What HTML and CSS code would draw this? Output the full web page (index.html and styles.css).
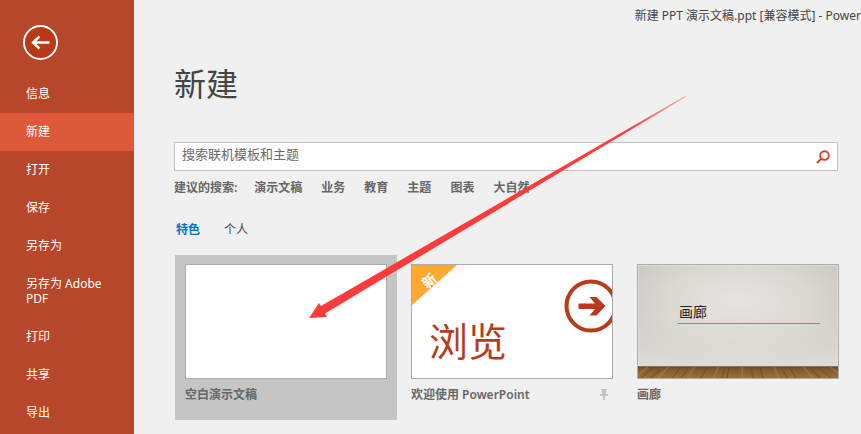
FILE: index.html
```html
<!DOCTYPE html>
<html lang="zh-CN">
<head>
<meta charset="utf-8">
<title>新建 PPT 演示文稿.ppt</title>
<link rel="stylesheet" href="styles.css">
</head>
<body>
<div class="app">
  <nav class="sidebar">
    <button class="back" type="button" aria-label="返回">
      <svg width="36" height="36" viewBox="0 0 36 36">
        <circle cx="18.500" cy="18.500" r="16.500" fill="#b93817" stroke="#fff" stroke-width="1.900"/>
        <path d="M27.500 18.500H11.500M17.500 12.500L11 18.500L17.500 24.500" fill="none" stroke="#fff" stroke-width="2.500"/>
      </svg>
    </button>
    <a class="nav-item" href="#">信息</a>
    <a class="nav-item active" href="#" aria-current="page">新建</a>
    <a class="nav-item" href="#">打开</a>
    <a class="nav-item" href="#">保存</a>
    <a class="nav-item" href="#">另存为</a>
    <a class="nav-item" href="#">另存为 Adobe PDF</a>
    <a class="nav-item" href="#">打印</a>
    <a class="nav-item" href="#">共享</a>
    <a class="nav-item" href="#">导出</a>
  </nav>
  <main class="main">
    <div class="titlebar">新建 PPT 演示文稿.ppt [兼容模式] - Power</div>
    <h1 class="heading">新建</h1>
    <form class="search">
      <input class="search-input" type="text" placeholder="搜索联机模板和主题" aria-label="搜索联机模板和主题">
      <button class="search-button" type="button" aria-label="搜索">
        <svg width="14" height="14" viewBox="0 0 14 14" fill="none" stroke="#d24726">
          <circle cx="8.500" cy="5.500" r="4.300" stroke-width="1.900"/>
          <path d="M5.500 8.500L1 13" stroke-width="2.200"/>
        </svg>
      </button>
    </form>
    <div class="suggestions">
      <span class="suggest-label">建议的搜索:</span>
      <a href="#">演示文稿</a>
      <a href="#">业务</a>
      <a href="#">教育</a>
      <a href="#">主题</a>
      <a href="#">图表</a>
      <a href="#">大自然</a>
    </div>
    <div class="tabs">
      <button class="tab selected" type="button">特色</button>
      <button class="tab" type="button">个人</button>
    </div>
    <div class="cards">
      <a class="card selected" href="#">
        <span class="thumb"></span>
        <span class="caption">空白演示文稿</span>
      </a>
      <a class="card" href="#">
        <span class="thumb browse">
          <svg class="art" viewBox="0 0 200 113" preserveAspectRatio="none">
            <path d="M0 0H45L0 40Z" fill="#ffa832"/>
            <circle cx="179" cy="41" r="24.500" fill="none" stroke="#b83c1c" stroke-width="4"/>
            <path d="M166.500 38.500H183L177.500 32H184.500L193.500 41L184.500 50.500H177.500L183 44H166.500Z" fill="#b83c1c"/>
          </svg>
          <span class="badge">新</span>
          <span class="browse-text">浏览</span>
        </span>
        <span class="caption">欢迎使用 PowerPoint
          <svg class="pin" width="8" height="11" viewBox="0 0 8 11"><path d="M1 0H7V1H6V5H8V7H5V11H3V7H0V5H2V1H1Z" fill="#c3c3c3"/></svg>
        </span>
      </a>
      <a class="card" href="#">
        <span class="thumb gallery">
          <svg class="art" viewBox="0 0 200 113" preserveAspectRatio="none">
            <defs>
              <radialGradient id="wall" cx=".5" cy=".35" r=".65">
                <stop offset="0" stop-color="#e6e4e1"/>
                <stop offset=".55" stop-color="#dbd8d4"/>
                <stop offset="1" stop-color="#c9c6c2"/>
              </radialGradient>
              <linearGradient id="light" x2="0" y2="1">
                <stop offset=".4" stop-color="#e5e2dc" stop-opacity="0"/>
                <stop offset="1" stop-color="#e5e2dc" stop-opacity=".8"/>
              </linearGradient>
              <linearGradient id="wood" x2="0" y2="1">
                <stop offset="0" stop-color="#68482a"/>
                <stop offset=".3" stop-color="#80592f"/>
                <stop offset="1" stop-color="#9b713d"/>
              </linearGradient>
            </defs>
            <rect width="200" height="102" fill="url(#wall)"/>
            <rect width="200" height="102" fill="url(#light)"/>
            <path d="M.5 101V.5H199.500V101" fill="none" stroke="#e7e5e2" stroke-opacity=".7"/>
            <rect y="101" width="200" height="12" fill="url(#wood)"/>
            <path d="M16 102L3 113M43 102L34 113M69 102L63 113M91 102L89 113M122 102L125 113M151 102L158 113M180 102L193 113" stroke="#5b3b1c" stroke-opacity=".6"/>
            <path d="M10 102L-4 113M30 102L20 113M57 102L49 113M80 102L76 113M104 102V113M136 102L141 113M165 102L175 113M192 102L207 113" stroke="#bc9053" stroke-opacity=".35" stroke-width="2"/>
            <path d="M22 105L12 113M50 104L43 113M86 105L84 113M113 103L115 113M144 105L150 113M172 103L182 113" stroke="#634422" stroke-opacity=".4" stroke-width="2"/>
            <path d="M0 101.500H200" stroke="#85715b"/>
            <path d="M39.500 58.500H182" stroke="#c46b80"/>
          </svg>
          <span class="gallery-text">画廊</span>
        </span>
        <span class="caption">画廊</span>
      </a>
    </div>
    <svg class="pointer" width="380" height="224" viewBox="0 0 380 224" aria-hidden="true">
      <defs>
        <linearGradient id="fade" gradientUnits="userSpaceOnUse" x1="377" y1="2" x2="320" y2="34">
          <stop offset="0" stop-color="#ff3b3b" stop-opacity=".4"/>
          <stop offset="1" stop-color="#ff3b3b"/>
        </linearGradient>
      </defs>
      <path d="M1 223L11 208L13 211L377 1L377.500 2L17 218.500L19 222Z" fill="url(#fade)"/>
    </svg>
  </main>
</div>
</body>
</html>
```
FILE: styles.css
```css
* { box-sizing: border-box; }
body {
  margin: 0;
  background: #f0f0f0;
  color: #444;
  font-family: "Noto Sans", "Noto Sans CJK SC", sans-serif;
  font-size: 12px;
  line-height: 15px;
}
a { color: inherit; text-decoration: none; }
button {
  border: 0;
  padding: 0;
  background: none;
  color: inherit;
  font: inherit;
}
.app { display: flex; min-height: 100vh; }
.sidebar {
  flex: 0 0 134px;
  display: flex;
  flex-direction: column;
  padding-top: 24px;
  background: #b7472a;
  color: #fff;
}
.back { width: 36px; height: 36px; margin: 0 0 15px 22px; }
.back svg { display: block; }
.nav-item { padding: 11px 26px 12px; }
.nav-item.active { background: #dc5939; }
.main { position: relative; flex: 1; min-width: 0; padding: 0 23px 0 40px; }
.titlebar {
  margin-right: -23px;
  padding-top: 8px;
  text-align: right;
  white-space: nowrap;
}
.heading {
  margin: 37px 0 0;
  font-size: 32px;
  font-weight: 400;
  line-height: 48px;
}
.search {
  display: flex;
  align-items: center;
  height: 29px;
  margin-top: 34px;
  padding: 0 7px;
  border: 1px solid #c3c3c3;
  background: #fff;
}
.search-input {
  flex: 1;
  min-width: 0;
  height: 22px;
  margin-bottom: 5px;
  padding: 0;
  border: 0;
  outline: 0;
  background: none;
  font: inherit;
  font-size: 13px;
}
.search-input::placeholder { color: #6a6a6a; opacity: 1; }
.search-button { width: 14px; height: 14px; }
.search-button svg { display: block; }
.suggestions {
  display: flex;
  gap: 19px;
  margin: 9px 0 0;
  color: #666;
  font-weight: 600;
}
.suggest-label { margin-right: -2px; }
.tabs { display: flex; gap: 24px; margin: 27px 0 0 2px; }
.tab.selected { color: #0072c6; font-weight: 700; }
.cards {
  display: grid;
  grid-template-columns: repeat(3, 222px);
  gap: 4px;
  margin: 18px 0 0 1px;
}
.card {
  display: flex;
  flex-direction: column;
  gap: 8px;
  min-height: 165px;
  padding: 9px 10px;
  color: #666;
  font-weight: 600;
}
.card.selected { background: #c5c5c5; }
.thumb {
  position: relative;
  display: block;
  height: 115px;
  overflow: hidden;
  border: 1px solid #ababab;
  background: #fff;
}
.art { display: block; width: 100%; height: 100%; }
.badge {
  position: absolute;
  top: 8px;
  left: 10px;
  color: #fff;
  font-size: 14px;
  font-weight: 700;
  transform: rotate(-40deg);
}
.browse-text {
  position: absolute;
  left: 17px;
  top: 50px;
  color: #b83c1c;
  font-size: 39px;
  font-weight: 400;
  line-height: 52px;
}
.gallery-text {
  position: absolute;
  left: 41px;
  top: 39px;
  color: #222;
  font-size: 14px;
  font-weight: 400;
}
.caption { display: flex; justify-content: space-between; align-items: center; }
.pin { margin-right: 5px; }
.pointer {
  position: absolute;
  left: 174px;
  top: 95px;
  pointer-events: none;
}
```
